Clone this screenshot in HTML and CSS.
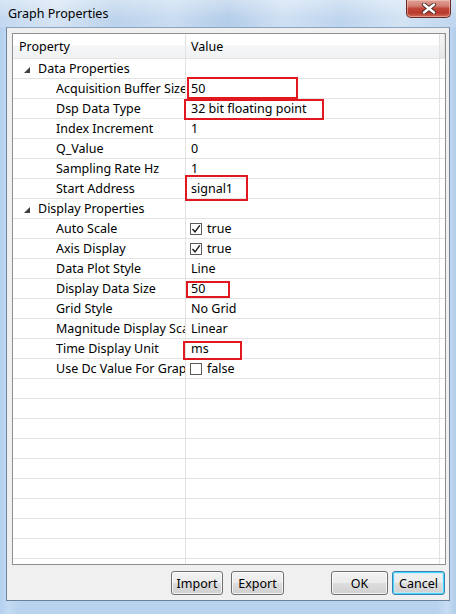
FILE: index.html
```html
<!DOCTYPE html>
<html>
<head>
<meta charset="utf-8">
<link rel="stylesheet" href="styles.css">
</head>
<body>
<div class="window">
  <div class="titlebar">
    <span class="title">Graph Properties</span>
    <div class="close">
      <svg width="16" height="11" viewBox="0 0 16 11"><path d="M3 1.5 L13 9.5 M13 1.5 L3 9.5" stroke="#4a2a26" stroke-width="4.2" stroke-linecap="round"/><path d="M3 1.5 L13 9.5 M13 1.5 L3 9.5" stroke="#ffffff" stroke-width="2.4" stroke-linecap="round"/></svg>
    </div>
  </div>
  <div class="client">
    <div class="grid">
      <div class="row head">
        <div class="c1">Property</div>
        <div class="c2">Value</div>
        <div class="c3"></div>
      </div>
      <div class="row">
        <div class="c1 cat"><svg class="tri" width="6" height="6" viewBox="0 0 6 6"><polygon points="6,0 6,6 0,6" fill="#404040"/></svg>Data Properties</div>
        <div class="c2"></div><div class="c3"></div>
      </div>
      <div class="row"><div class="c1 item">Acquisition Buffer Size</div><div class="c2">50</div><div class="c3"></div></div>
      <div class="row"><div class="c1 item">Dsp Data Type</div><div class="c2">32 bit floating point</div><div class="c3"></div></div>
      <div class="row"><div class="c1 item">Index Increment</div><div class="c2">1</div><div class="c3"></div></div>
      <div class="row"><div class="c1 item">Q_Value</div><div class="c2">0</div><div class="c3"></div></div>
      <div class="row"><div class="c1 item">Sampling Rate Hz</div><div class="c2">1</div><div class="c3"></div></div>
      <div class="row"><div class="c1 item">Start Address</div><div class="c2">signal1</div><div class="c3"></div></div>
      <div class="row">
        <div class="c1 cat"><svg class="tri" width="6" height="6" viewBox="0 0 6 6"><polygon points="6,0 6,6 0,6" fill="#404040"/></svg>Display Properties</div>
        <div class="c2"></div><div class="c3"></div>
      </div>
      <div class="row"><div class="c1 item">Auto Scale</div><div class="c2 chk"><svg class="box" width="12" height="12" viewBox="0 0 12 12"><rect x="0.5" y="0.5" width="11" height="11" fill="#fff" stroke="#5a5a5a"/><path d="M2.5 6 L5 8.8 L9.8 2.4" fill="none" stroke="#1a1a1a" stroke-width="1.4"/></svg>true</div><div class="c3"></div></div>
      <div class="row"><div class="c1 item">Axis Display</div><div class="c2 chk"><svg class="box" width="12" height="12" viewBox="0 0 12 12"><rect x="0.5" y="0.5" width="11" height="11" fill="#fff" stroke="#5a5a5a"/><path d="M2.5 6 L5 8.8 L9.8 2.4" fill="none" stroke="#1a1a1a" stroke-width="1.4"/></svg>true</div><div class="c3"></div></div>
      <div class="row"><div class="c1 item">Data Plot Style</div><div class="c2">Line</div><div class="c3"></div></div>
      <div class="row"><div class="c1 item">Display Data Size</div><div class="c2">50</div><div class="c3"></div></div>
      <div class="row"><div class="c1 item">Grid Style</div><div class="c2">No Grid</div><div class="c3"></div></div>
      <div class="row"><div class="c1 item">Magnitude Display Scale</div><div class="c2">Linear</div><div class="c3"></div></div>
      <div class="row"><div class="c1 item">Time Display Unit</div><div class="c2">ms</div><div class="c3"></div></div>
      <div class="row"><div class="c1 item">Use Dc Value For Graph</div><div class="c2 chk"><svg class="box" width="12" height="12" viewBox="0 0 12 12"><rect x="0.5" y="0.5" width="11" height="11" fill="#fff" stroke="#5a5a5a"/></svg>false</div><div class="c3"></div></div>
      <div class="row"><div class="c1"></div><div class="c2"></div><div class="c3"></div></div>
      <div class="row"><div class="c1"></div><div class="c2"></div><div class="c3"></div></div>
      <div class="row"><div class="c1"></div><div class="c2"></div><div class="c3"></div></div>
      <div class="row"><div class="c1"></div><div class="c2"></div><div class="c3"></div></div>
      <div class="row"><div class="c1"></div><div class="c2"></div><div class="c3"></div></div>
      <div class="row"><div class="c1"></div><div class="c2"></div><div class="c3"></div></div>
      <div class="row"><div class="c1"></div><div class="c2"></div><div class="c3"></div></div>
      <div class="row"><div class="c1"></div><div class="c2"></div><div class="c3"></div></div>
      <div class="row"><div class="c1"></div><div class="c2"></div><div class="c3"></div></div>
      <div class="rest"><div class="c1"></div><div class="c2"></div><div class="c3"></div></div>

      <div class="mark m1"></div>
      <div class="mark m2"></div>
      <div class="mark m3"></div>
      <div class="mark m4"></div>
      <div class="mark m5"></div>
    </div>
    <div class="buttons">
      <div class="btn b-import">Import</div>
      <div class="btn b-export">Export</div>
      <div class="btn b-ok">OK</div>
      <div class="btn b-cancel">Cancel</div>
    </div>
  </div>
</div>
</body>
</html>
```

FILE: styles.css
```css
* { box-sizing: border-box; }
html, body { margin: 0; padding: 0; }
body {
  width: 456px;
  height: 614px;
  overflow: hidden;
  font-family: "Noto Sans", "Liberation Sans", sans-serif;
  font-size: 12px;
  color: #000;
}
.window {
  width: 456px;
  height: 614px;
  display: flex;
  flex-direction: column;
  background:
    linear-gradient(to right, #b4d0ef 0%, #c4dbf3 2%, #b9d3ee 4%, #b9d3ee 96%, #c8ddf4 98%, #b1cdea 100%);
  padding: 0 6px 13px 6px;
}
.titlebar {
  height: 27px;
  flex: none;
  position: relative;
  margin: 0 -6px;
  padding-left: 8px;
  display: flex;
  align-items: center;
  background:
    linear-gradient(to bottom, rgba(255,255,255,0.35), rgba(255,255,255,0) 70%),
    linear-gradient(to right, #c3d8ef 0%, #d5e4f4 12%, #bcd3ec 25%, #c9dcf1 38%, #b4cde9 50%, #cfe0f3 62%, #bed5ee 75%, #d3e3f4 88%, #c0d6ee 100%);
}
.title {
  font-size: 12.5px;
  color: #000;
}
.close {
  position: absolute;
  left: 406px;
  top: 0;
  width: 45px;
  height: 18px;
  border: 1px solid #6a2b24;
  border-top: none;
  border-radius: 0 0 5px 5px;
  background: linear-gradient(to bottom, #dea096 0%, #d27f73 35%, #c0473a 50%, #b8392c 75%, #d06a5c 100%);
  box-shadow: inset 0 0 0 1px rgba(255,220,210,0.45);
  display: flex;
  align-items: center;
  justify-content: center;
}
.client {
  flex: 1;
  background: #f0f0f0;
  border: 1px solid #6d8299;
  border-top-color: #8aa4c0;
  padding: 5px 3px 0 5px;
  display: flex;
  flex-direction: column;
}
.grid {
  position: relative;
  width: 434px;
  height: 532px;
  border: 1px solid #8c8f94;
  background: #fff;
  display: flex;
  flex-direction: column;
  overflow: hidden;
  font-size: 12.5px;
}
.row {
  display: flex;
  height: 20px;
  flex: none;
  border-bottom: 1px solid #e2e2e2;
}
.row.head {
  height: 25px;
  border-bottom: 1px solid #e2e3e5;
  background: linear-gradient(to bottom, #ffffff 0%, #ffffff 45%, #f4f5f7 50%, #f1f2f4 100%);
}
.rest {
  display: flex;
  flex: 1;
}
.c1 {
  width: 173px;
  flex: none;
  border-right: 1px solid #e2e2e2;
  display: flex;
  align-items: center;
  white-space: nowrap;
  overflow: hidden;
}
.c2 {
  width: 254px;
  flex: none;
  border-right: 1px solid #e2e2e2;
  display: flex;
  align-items: center;
  padding-left: 5px;
  white-space: nowrap;
  overflow: hidden;
}
.c3 { flex: 1; }
.head .c1 { padding-left: 6px; }
.head .c2 { padding-left: 5px; }
.head .c3 { background: linear-gradient(to bottom, #f6f6f6, #e6e6e6); border-right: 1px solid #e0e0e0; }
.cat { padding-left: 11px; }
.tri { margin-right: 8px; margin-top: 2px; flex: none; }
.item { padding-left: 43px; }
.chk { padding-left: 4px; }
.box { margin-right: 5px; flex: none; }

.mark {
  position: absolute;
  border: 2px solid #e3171f;
}
.m1 { left: 174px; top: 43px; width: 111px; height: 22px; }
.m2 { left: 171px; top: 65px; width: 140px; height: 21px; }
.m3 { left: 172px; top: 141px; width: 63px; height: 26px; }
.m4 { left: 173px; top: 247px; width: 44px; height: 17px; }
.m5 { left: 170px; top: 307px; width: 59px; height: 19px; }

.buttons {
  display: flex;
  margin-top: 6px;
  padding-left: 159px;
}
.btn {
  height: 24px;
  border: 1px solid #707070;
  border-radius: 3px;
  background: linear-gradient(to bottom, #f2f2f2 0%, #ebebeb 48%, #dddddd 52%, #cfcfcf 100%);
  box-shadow: inset 0 0 0 1px rgba(255,255,255,0.7);
  display: flex;
  align-items: center;
  justify-content: center;
  font-size: 12.5px;
}
.b-import { width: 52px; }
.b-export { width: 53px; margin-left: 8px; }
.b-ok { width: 57px; margin-left: 47px; }
.b-cancel {
  width: 53px;
  margin-left: 4px;
  border-color: #3c7fb1;
  box-shadow: inset 0 0 0 1px #48d8fb, inset 0 0 0 2px rgba(190,235,252,0.6);
}
```
